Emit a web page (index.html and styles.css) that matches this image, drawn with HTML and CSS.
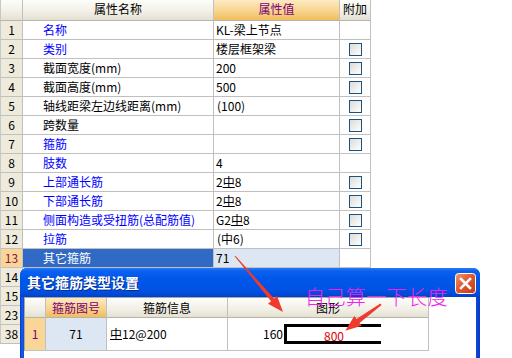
FILE: index.html
```html
<!DOCTYPE html>
<html lang="zh-CN">
<head>
    <meta charset="UTF-8">
    <meta name="viewport" content="width=device-width, initial-scale=1.0">
    <title>属性编辑器</title>
    <link rel="stylesheet" href="styles.css">
</head>
<body>

<div class="screen">

    <div class="prop-grid">
        <div class="row head">
            <div class="cell num"></div>
            <div class="cell">属性名称</div>
            <div class="cell sel-head">属性值</div>
            <div class="cell">附加</div>
        </div>
        <div class="row">
            <div class="cell num">1</div>
            <div class="cell name blue">名称</div>
            <div class="cell val">KL-梁上节点</div>
            <div class="cell add"></div>
        </div>
        <div class="row">
            <div class="cell num">2</div>
            <div class="cell name blue">类别</div>
            <div class="cell val">楼层框架梁</div>
            <div class="cell add"><span class="chk"></span></div>
        </div>
        <div class="row">
            <div class="cell num">3</div>
            <div class="cell name">截面宽度(mm)</div>
            <div class="cell val">200</div>
            <div class="cell add"><span class="chk"></span></div>
        </div>
        <div class="row">
            <div class="cell num">4</div>
            <div class="cell name">截面高度(mm)</div>
            <div class="cell val">500</div>
            <div class="cell add"><span class="chk"></span></div>
        </div>
        <div class="row">
            <div class="cell num">5</div>
            <div class="cell name">轴线距梁左边线距离(mm)</div>
            <div class="cell val paren">(100)</div>
            <div class="cell add"><span class="chk"></span></div>
        </div>
        <div class="row">
            <div class="cell num">6</div>
            <div class="cell name">跨数量</div>
            <div class="cell val"></div>
            <div class="cell add"><span class="chk"></span></div>
        </div>
        <div class="row">
            <div class="cell num">7</div>
            <div class="cell name blue">箍筋</div>
            <div class="cell val"></div>
            <div class="cell add"><span class="chk"></span></div>
        </div>
        <div class="row">
            <div class="cell num">8</div>
            <div class="cell name blue">肢数</div>
            <div class="cell val">4</div>
            <div class="cell add"></div>
        </div>
        <div class="row">
            <div class="cell num">9</div>
            <div class="cell name blue">上部通长筋</div>
            <div class="cell val">2<span class="hrb">中</span>8</div>
            <div class="cell add"><span class="chk"></span></div>
        </div>
        <div class="row">
            <div class="cell num">10</div>
            <div class="cell name blue">下部通长筋</div>
            <div class="cell val">2<span class="hrb">中</span>8</div>
            <div class="cell add"><span class="chk"></span></div>
        </div>
        <div class="row">
            <div class="cell num">11</div>
            <div class="cell name blue">侧面构造或受扭筋(总配筋值)</div>
            <div class="cell val">G2<span class="hrb">中</span>8</div>
            <div class="cell add"><span class="chk"></span></div>
        </div>
        <div class="row">
            <div class="cell num">12</div>
            <div class="cell name blue">拉筋</div>
            <div class="cell val paren">(中6)</div>
            <div class="cell add"><span class="chk"></span></div>
        </div>
        <div class="row">
            <div class="cell num cur">13</div>
            <div class="cell name selected">其它箍筋</div>
            <div class="cell val cur-val">71</div>
            <div class="cell add"></div>
        </div>
        <div class="row">
            <div class="cell num">14</div>
            <div class="cell name"></div>
            <div class="cell val"></div>
            <div class="cell add"></div>
        </div>
        <div class="row">
            <div class="cell num">15</div>
            <div class="cell name"></div>
            <div class="cell val"></div>
            <div class="cell add"></div>
        </div>
        <div class="row">
            <div class="cell num">23</div>
            <div class="cell name"></div>
            <div class="cell val"></div>
            <div class="cell add"></div>
        </div>
        <div class="row">
            <div class="cell num">38</div>
            <div class="cell name"></div>
            <div class="cell val"></div>
            <div class="cell add"></div>
        </div>
    </div>

    <!-- 其它箍筋类型设置 -->
    <div class="dialog">
        <div class="dlg-title">
            其它箍筋类型设置
            <svg class="close" width="21" height="21" viewBox="0 0 21 21">
                <defs>
                    <linearGradient id="closeBg" x1="0" y1="0" x2="1" y2="1">
                        <stop offset="0" stop-color="#f29a7a"/>
                        <stop offset="0.45" stop-color="#e2582f"/>
                        <stop offset="1" stop-color="#c43a16"/>
                    </linearGradient>
                </defs>
                <rect x="0.5" y="0.5" width="20" height="20" rx="3" fill="url(#closeBg)" stroke="#fff"/>
                <path d="M6 6 L15 15 M15 6 L6 15" stroke="#fff" stroke-width="2.6" stroke-linecap="square"/>
            </svg>
        </div>
        <div class="dlg-client">
            <div class="set-grid">
                <div class="set-row head">
                    <div class="cell"></div>
                    <div class="cell sel-head">箍筋图号</div>
                    <div class="cell">箍筋信息</div>
                    <div class="cell">图形</div>
                </div>
                <div class="set-row tall">
                    <div class="cell num cur">1</div>
                    <div class="cell code">71</div>
                    <div class="cell info"><span class="hrb">中</span>12@200</div>
                    <div class="cell shape">
                        <span>160</span>
                        <div class="stirrup">800</div>
                    </div>
                </div>
            </div>
        </div>
    </div>

    <div class="note">自己算一下长度</div>

    <svg class="arrows" width="512" height="358" viewBox="0 0 512 358">
        <polygon points="235.4,255.7 274.1,298.6 277.1,296.0 283,312 268.0,303.8 271.1,301.2 234.6,256.3"/>
        <polygon points="380.4,303.5 356.5,318.9 354.3,316.1 345.3,330.7 361.7,325.7 359.5,322.9 381.6,305.1"/>
    </svg>

</div>

</body>
</html>
```

FILE: styles.css
```css
body {
    margin: 0;
    font-family: "Noto Sans CJK SC", sans-serif;
    font-size: 12px;
    color: #000;
    background: #fff;
}

.screen {
    position: relative;
    width: 512px;
    height: 358px;
    overflow: hidden;
}

/* main property grid */

.prop-grid {
    width: 371px;
}

.row {
    display: grid;
    grid-template-columns: 23px 191px 126px 31px;
    height: 19px;
}

.row.head {
    height: 21px;
}

.cell {
    box-sizing: border-box;
    border-right: 1px solid #c0c0c0;
    border-bottom: 1px solid #c0c0c0;
    line-height: 18px;
    white-space: nowrap;
    overflow: hidden;
}

.head .cell {
    text-align: center;
    background: linear-gradient(#fdfdfa, #f1efe6 60%, #e4e1d2);
    border-bottom-color: #b8b5a6;
}

.head .sel-head {
    color: #7a0078;
    background: linear-gradient(#fdeac2, #f8d48e 55%, #f2bd5c);
}

.num {
    text-align: center;
    background: #eeebdc;
    border-left: 1px solid #c8c8c8;
}

.num.cur {
    color: #8c1050;
    background: #f9d696;
}

.name {
    padding-left: 20px;
}

.blue {
    color: #0000ff;
}

.selected {
    color: #fff;
    background: #316ac5;
}

.val {
    padding-left: 2px;
}

.val.paren {
    padding-left: 3px;
}

.cur-val {
    background: #dde7f3;
}

.add {
    display: flex;
    align-items: center;
    justify-content: center;
}

.chk {
    width: 13px;
    height: 13px;
    box-sizing: border-box;
    border: 1px solid #1c5180;
    background: linear-gradient(135deg, #dcdcd6, #f4f4f1 70%, #fff);
}

.hrb {
    text-decoration: underline;
    text-decoration-thickness: 1px;
    text-decoration-skip-ink: none;
    text-underline-offset: 0;
}

/* dialog window */

.dialog {
    position: absolute;
    left: 20px;
    top: 268px;
    width: 460px;
    height: 120px;
    background: linear-gradient(to right, #0833c4, #1a5ce6 2px, #0a4ad8 4px, #0a4ad8 456px, #0839c8);
    border-radius: 7px 7px 0 0;
}

.dlg-title {
    position: relative;
    height: 29px;
    padding-left: 7px;
    border-radius: 7px 7px 0 0;
    background: linear-gradient(#2a7af3, #0a61f0 3px, #0057ea 35%, #0053e4 75%, #0049d6 92%, #0040c4);
    color: #fff;
    font-size: 14px;
    font-weight: bold;
    line-height: 29px;
    text-shadow: 1px 1px 0 #0a2a8c;
}

.close {
    position: absolute;
    top: 5px;
    right: 4px;
}

.dlg-client {
    margin: 0 4px;
    height: 91px;
    background: #fff;
}

.set-grid {
    width: 405px;
    border-top: 1px solid #a8a8a8;
    border-left: 1px solid #a8a8a8;
}

.set-row {
    display: grid;
    grid-template-columns: 21px 61px 121px 201px;
    height: 20px;
}

.set-row.head .cell {
    line-height: 19px;
}

.set-row.tall {
    height: 33px;
}

.set-row.tall .cell {
    line-height: 32px;
}

.set-row .num {
    border-left: none;
    color: #7a0078;
}

.code {
    text-align: center;
    background: #dde7f3;
}

.info {
    padding-left: 3px;
}

.shape {
    display: flex;
    align-items: center;
    padding-left: 35px;
}

.stirrup {
    width: 97px;
    height: 20px;
    margin-left: 1px;
    box-sizing: border-box;
    border: 3px solid #000;
    border-right: none;
    color: #e00000;
    text-align: center;
    line-height: 16px;
    padding-top: 1px;
}

/* hand-drawn notes on top */

.note {
    position: absolute;
    left: 305px;
    top: 287px;
    font-size: 20px;
    font-weight: 300;
    line-height: 20px;
    letter-spacing: 0.4px;
    color: #f020f0;
    white-space: nowrap;
}

.arrows {
    position: absolute;
    left: 0;
    top: 0;
    fill: #ef3a2e;
    pointer-events: none;
}
```
